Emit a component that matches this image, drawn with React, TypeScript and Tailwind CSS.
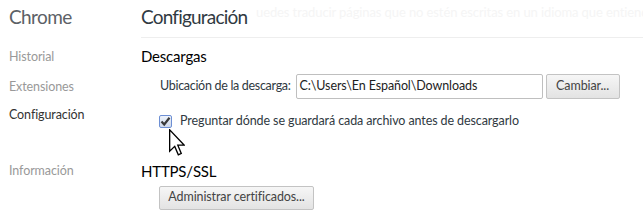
import React from "react";

function Cursor() {
  return (
    <svg width="16" height="27" viewBox="0 0 12 20" className="absolute left-[169px] top-[129px]">
      <path d="M0.5 0.5 L0.5 16.5 L4.3 12.9 L7 19.2 L9.2 18.2 L6.6 12 L11.5 12 Z" fill="#fff" stroke="#000" strokeWidth="1" strokeLinejoin="miter" />
    </svg>
  );
}

export default function App() {
  const font = { fontFamily: 'Lato, "Noto Sans", sans-serif' } as React.CSSProperties;
  return (
    <div className="relative w-[643px] h-[218px] bg-white overflow-hidden" style={font}>
      <div className="absolute left-[256px] top-[3px] text-[13px] text-[#f5f5f5] whitespace-nowrap tracking-[-0.1px]">
        uedes traducir páginas que no estén escritas en un idioma que entiendas
      </div>
      <div className="flex">
        <div className="w-[141px] shrink-0 pl-[9px]">
          <div className="text-[19px] leading-[26px] pt-[4px] text-[#5c6166] tracking-[-0.6px]">Chrome</div>
          <div className="mt-[18px] flex flex-col text-[12.5px] text-[#999] tracking-[-0.1px]">
            <div className="h-[30px] leading-[18px]">Historial</div>
            <div className="h-[28px] leading-[18px]">Extensiones</div>
            <div className="h-[56px] leading-[18px] text-[#333]">Configuración</div>
            <div className="leading-[18px]">Información</div>
          </div>
        </div>
        <div className="flex-1 flex flex-col">
          <div className="text-[19px] leading-[26px] pt-[4px] text-[#303942] tracking-[-0.8px]">Configuración</div>
          <div className="mt-[7px] h-px bg-[#eeeeee]" />
          <div className="mt-[8px] text-[15px] leading-[20px] text-[#000] tracking-[-0.2px]">Descargas</div>
          <div className="mt-[8px] ml-[19px] flex items-center h-[25px] text-[12.5px] text-[#303942] tracking-[-0.1px]">
            <span className="mr-[5px] tracking-[-0.3px]">Ubicación de la descarga:</span>
            <div className="w-[247px] h-[25px] border border-[#bfbfbf] rounded-[2px] px-[3px] flex items-center text-[#222]">
              C:\Users\En Español\Downloads
            </div>
            <div className="ml-[3px] w-[74px] h-[25px] border border-[#c3c3c3] rounded-[2px] bg-gradient-to-b from-[#f6f6f6] to-[#e3e3e3] flex items-center justify-center text-[#444]">
              Cambiar...
            </div>
          </div>
          <div className="mt-[13px] ml-[18px] flex items-center text-[12.5px] text-[#303942] tracking-[-0.1px]">
            <div className="w-[13px] h-[13px] border border-[#6d8fd4] rounded-[2px] bg-gradient-to-b from-[#eef3fb] to-[#cfd9ea] flex items-center justify-center">
              <svg width="11" height="11" viewBox="0 0 11 11">
                <path d="M1.5 5.5 L4.2 8.5 L9.5 1.8" fill="none" stroke="#3a3a3a" strokeWidth="2.2" />
              </svg>
            </div>
            <span className="ml-[8px]">Preguntar dónde se guardará cada archivo antes de descargarlo</span>
          </div>
          <div className="mt-[30px] text-[15px] leading-[20px] text-[#000] tracking-[-0.2px]">HTTPS/SSL</div>
          <div className="mt-[5px] ml-[18px] w-[155px] h-[24px] border border-[#c3c3c3] rounded-[2px] bg-gradient-to-b from-[#f6f6f6] to-[#e3e3e3] flex items-center justify-center text-[12.5px] text-[#444] tracking-[-0.1px]">
            Administrar certificados...
          </div>
        </div>
      </div>
      <Cursor />
    </div>
  );
}
